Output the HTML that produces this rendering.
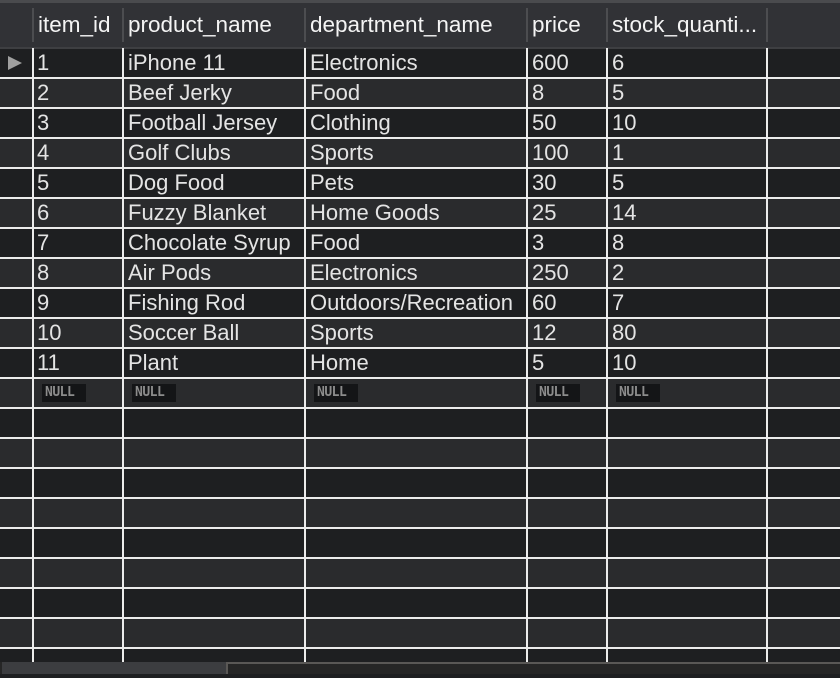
<!DOCTYPE html><html><head><style>
body{margin:0;width:840px;height:674px;overflow:hidden;background:#1e1f21;font-family:"Liberation Sans",Helvetica,sans-serif;position:relative}
div{position:absolute;box-sizing:border-box}
.t{color:#e4e4e4;font-size:22px;line-height:30px;white-space:nowrap}
.h{color:#f4f4f4;font-size:22.5px;line-height:44px;top:3px;white-space:nowrap}
.r0{background:#1e1f21;left:0;width:840px;height:30px}
.r1{background:#2a2b2d;left:0;width:840px;height:30px}
.hl{background:#ececec;left:0;width:840px;height:2px}
.vl{background:#ececec;width:2px;top:48px;height:614px}
.hs{background:#4c4d50;width:2px;top:8px;height:34px}
.n{background:#141517;color:#8c8c8c;font-family:"DejaVu Sans Mono",monospace;font-size:13px;font-weight:bold;height:18px;line-height:18px;padding:0 0 0 3px;top:384px;letter-spacing:-0.5px;width:44px}
</style></head><body>
<div style="left:0;top:0;width:840px;height:3px;background:#4a4b4e"></div>
<div style="left:0;top:3px;width:840px;height:45px;background:#313236"></div>
<div class="r0" style="top:48px"></div><div class="r1" style="top:78px"></div><div class="r0" style="top:108px"></div><div class="r1" style="top:138px"></div><div class="r0" style="top:168px"></div><div class="r1" style="top:198px"></div><div class="r0" style="top:228px"></div><div class="r1" style="top:258px"></div><div class="r0" style="top:288px"></div><div class="r1" style="top:318px"></div><div class="r0" style="top:348px"></div><div class="r1" style="top:378px"></div><div class="r0" style="top:408px"></div><div class="r1" style="top:438px"></div><div class="r0" style="top:468px"></div><div class="r1" style="top:498px"></div><div class="r0" style="top:528px"></div><div class="r1" style="top:558px"></div><div class="r0" style="top:588px"></div><div class="r1" style="top:618px"></div><div class="r0" style="top:648px"></div>
<div class="hl" style="top:77px"></div><div class="hl" style="top:107px"></div><div class="hl" style="top:137px"></div><div class="hl" style="top:167px"></div><div class="hl" style="top:197px"></div><div class="hl" style="top:227px"></div><div class="hl" style="top:257px"></div><div class="hl" style="top:287px"></div><div class="hl" style="top:317px"></div><div class="hl" style="top:347px"></div><div class="hl" style="top:377px"></div><div class="hl" style="top:407px"></div><div class="hl" style="top:437px"></div><div class="hl" style="top:467px"></div><div class="hl" style="top:497px"></div><div class="hl" style="top:527px"></div><div class="hl" style="top:557px"></div><div class="hl" style="top:587px"></div><div class="hl" style="top:617px"></div><div class="hl" style="top:647px"></div>
<div style="left:0;top:47px;width:840px;height:2px;background:#3e3f42"></div>
<div class="vl" style="left:32px"></div><div class="vl" style="left:122px"></div><div class="vl" style="left:304px"></div><div class="vl" style="left:526px"></div><div class="vl" style="left:606px"></div><div class="vl" style="left:766px"></div>
<div class="hs" style="left:32px"></div><div class="hs" style="left:122px"></div><div class="hs" style="left:304px"></div><div class="hs" style="left:526px"></div><div class="hs" style="left:606px"></div><div class="hs" style="left:766px"></div>
<div class="h" style="left:38px">item_id</div><div class="h" style="left:128px">product_name</div><div class="h" style="left:310px">department_name</div><div class="h" style="left:532px">price</div><div class="h" style="left:612px">stock_quanti...</div>
<div style="left:8px;top:56px;width:0;height:0;border-left:14px solid #a0a0a0;border-top:7px solid transparent;border-bottom:7px solid transparent"></div>
<div class="t" style="left:37px;top:48px">1<br>2<br>3<br>4<br>5<br>6<br>7<br>8<br>9<br>10<br>11</div>
<div class="t" style="left:128px;top:48px">iPhone 11<br>Beef Jerky<br>Football Jersey<br>Golf Clubs<br>Dog Food<br>Fuzzy Blanket<br>Chocolate Syrup<br>Air Pods<br>Fishing Rod<br>Soccer Ball<br>Plant</div>
<div class="t" style="left:310px;top:48px">Electronics<br>Food<br>Clothing<br>Sports<br>Pets<br>Home Goods<br>Food<br>Electronics<br>Outdoors/Recreation<br>Sports<br>Home</div>
<div class="t" style="left:532px;top:48px">600<br>8<br>50<br>100<br>30<br>25<br>3<br>250<br>60<br>12<br>5</div>
<div class="t" style="left:612px;top:48px">6<br>5<br>10<br>1<br>5<br>14<br>8<br>2<br>7<br>80<br>10</div>
<div class="n" style="left:42px">NULL</div><div class="n" style="left:132px">NULL</div><div class="n" style="left:314px">NULL</div><div class="n" style="left:536px">NULL</div><div class="n" style="left:616px">NULL</div>
<div style="left:0;top:662px;width:840px;height:12px;background:#262626"></div>
<div style="left:227px;top:662px;width:613px;height:2px;background:#5a5856"></div>
<div style="left:226px;top:662px;width:2px;height:12px;background:#5a5856"></div>
<div style="left:2px;top:662px;width:224px;height:12px;background:#3c3d40"></div>
</body></html>
